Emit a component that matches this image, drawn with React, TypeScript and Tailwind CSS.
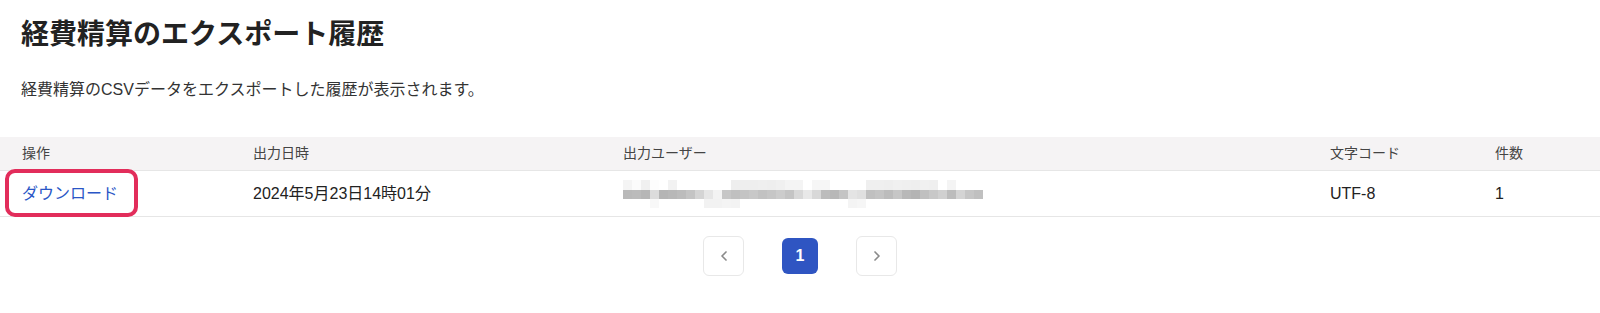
import { ChevronLeft, ChevronRight } from 'lucide-react';

const font = { fontFamily: '"Liberation Sans", "Noto Sans CJK JP", sans-serif' };

const columns = [
  { key: 'action', label: '操作' },
  { key: 'date', label: '出力日時' },
  { key: 'user', label: '出力ユーザー' },
  { key: 'encoding', label: '文字コード' },
  { key: 'count', label: '件数' },
];

// pixelated (blurred) user name
const mosaicMain = [
  '#b9b9b9', '#bbbbbb', '#b6b6b6', '#dcdcdc', '#b5b5b5', '#b8b8b8', '#bcbcbc', '#c4c4c4',
  '#d4d4d4', '#e6e6e6', '#f3f3f3', '#c6c6c6', '#c0c0c0', '#c4c4c4', '#c8c8c8', '#c2c2c2',
  '#c6c6c6', '#cccccc', '#c4c4c4', '#d8d8d8', '#e8e8e8', '#d8d8d8', '#bcbcbc', '#b8b8b8',
  '#c4c4c4', '#e4e4e4', '#e0e0e0', '#c0c0c0', '#c4c4c4', '#bcbcbc', '#c6c6c6', '#b8b8b8',
  '#b4b4b4', '#c0c0c0', '#c8c8c8', '#d0d0d0', '#bcbcbc', '#d4d4d4', '#c6c6c6', '#c0c0c0',
];
const mosaicTop = [
  '#f4f4f4', '#fbfbfb', '#f0f0f0', '#fdfdfd', '#fff', '#f2f2f2', '#fff', '#fff',
  '#fff', '#fff', '#fff', '#ffffff', '#eeeeee', '#eeeeee', '#eeeeee', '#efefef',
  '#eeeeee', '#f0f0f0', '#f4f4f4', '#f4f4f4', '#fff', '#f6f6f6', '#f6f6f6', '#fff',
  '#fff', '#fff', '#fff', '#efefef', '#efefef', '#eeeeee', '#f0f0f0', '#efefef',
  '#eeeeee', '#f0f0f0', '#efefef', '#fff', '#f4f4f4', '#fff', '#fff', '#fff',
];
const mosaicBottom = [
  '#fff', '#fff', '#fff', '#f8f8f8', '#fff', '#fff', '#fff', '#fff',
  '#fff', '#f2f2f2', '#f2f2f2', '#f4f4f4', '#f3f3f3', '#fff', '#fff', '#fff',
  '#fff', '#fff', '#fff', '#fff', '#fff', '#fff', '#fff', '#fff',
  '#fff', '#f4f4f4', '#f6f6f6', '#fff', '#fff', '#fff', '#fff', '#fff',
  '#fff', '#fff', '#fff', '#fff', '#fff', '#fff', '#fff', '#fff',
];

const MosaicRow = ({ cells, h }: { cells: string[]; h: string }) => (
  <div className={`flex ${h}`}>
    {cells.map((c, i) => (
      <div key={i} className="w-[9px] shrink-0" style={{ backgroundColor: c }} />
    ))}
  </div>
);

const gridCols = 'grid grid-cols-[231px_370px_707px_165px_1fr]';

export default function App() {
  return (
    <div className="w-[1600px] h-[313px] bg-white text-[#333] overflow-hidden" style={font}>
      {/* Heading */}
      <div className="px-[21px] pt-[17px]">
        <h1 className="text-[28px] leading-[36px] font-bold text-[#222]">経費精算のエクスポート履歴</h1>
        <p className="mt-[25px] text-[16px] leading-[24px] text-[#333]">
          経費精算のCSVデータをエクスポートした履歴が表示されます。
        </p>
      </div>

      {/* Table */}
      <div className="mt-[35px]">
        <div className={`${gridCols} h-[34px] bg-[#f5f3f4] border-b border-[#e6e6e6] items-center text-[14px] text-[#444]`}>
          {columns.map((col) => (
            <div key={col.key} className="pl-[22px]">{col.label}</div>
          ))}
        </div>
        <div className={`${gridCols} h-[46px] border-b border-[#e6e6e6] items-center text-[16px] text-[#222]`}>
          <div className="relative pl-[22px] h-full flex items-center">
            <a href="#" className="text-[#2a56c6]">ダウンロード</a>
            {/* highlight annotation */}
            <div className="absolute left-[5px] top-[-2px] w-[133px] h-[48px] border-4 border-[#e22d5b] rounded-[10px]" />
          </div>
          <div className="pl-[22px]">2024年5月23日14時01分</div>
          <div className="pl-[22px] flex flex-col">
            <MosaicRow cells={mosaicTop} h="h-[10px]" />
            <MosaicRow cells={mosaicMain} h="h-[9px]" />
            <MosaicRow cells={mosaicBottom} h="h-[9px]" />
          </div>
          <div className="pl-[22px]">UTF-8</div>
          <div className="pl-[22px]">1</div>
        </div>
      </div>

      {/* Pagination */}
      <div className="flex justify-center items-center gap-[38px] mt-[19px]">
        <button className="w-[41px] h-[40px] flex items-center justify-center border border-[#e8e8e8] rounded-md text-[#8a8a8a]">
          <ChevronLeft className="w-[16px] h-[16px]" strokeWidth={2.5} />
        </button>
        <button className="w-[36px] h-[36px] flex items-center justify-center bg-[#2f55c2] rounded-md text-white font-bold text-[16px]">
          1
        </button>
        <button className="w-[41px] h-[40px] flex items-center justify-center border border-[#e8e8e8] rounded-md text-[#8a8a8a]">
          <ChevronRight className="w-[16px] h-[16px]" strokeWidth={2.5} />
        </button>
      </div>
    </div>
  );
}
